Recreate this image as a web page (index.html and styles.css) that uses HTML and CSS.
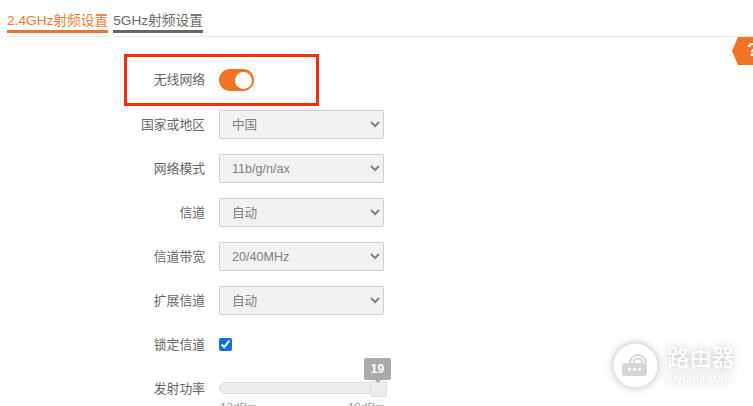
FILE: index.html
```html
<!DOCTYPE html>
<html lang="zh">
<head>
<meta charset="utf-8">
<title>射频设置</title>
<link rel="stylesheet" href="styles.css">
</head>
<body>
<div class="page">
  <nav class="tabs">
    <a class="tab tab-active">2.4GHz射频设置</a>
    <a class="tab">5GHz射频设置</a>
  </nav>
  <div class="help"><span class="help-mark">?</span></div>
  <form class="form">
    <div class="row row-first">
      <span class="label label-first">无线网络</span>
      <span class="toggle"><span class="knob"></span></span>
    </div>
    <div class="row"><span class="label">国家或地区</span><select class="select" disabled><option>中国</option></select></div>
    <div class="row"><span class="label">网络模式</span><select class="select" disabled><option>11b/g/n/ax</option></select></div>
    <div class="row"><span class="label">信道</span><select class="select" disabled><option>自动</option></select></div>
    <div class="row"><span class="label">信道带宽</span><select class="select" disabled><option>20/40MHz</option></select></div>
    <div class="row"><span class="label">扩展信道</span><select class="select" disabled><option>自动</option></select></div>
    <div class="row"><span class="label">锁定信道</span><input class="check" type="checkbox" checked></div>
    <div class="row">
      <span class="label">发射功率</span>
      <div class="slider">
        <div class="track"></div>
        <div class="thumb"></div>
        <div class="bubble">19</div>
        <div class="scale"><span>13dBm</span><span>19dBm</span></div>
      </div>
    </div>
  </form>
  <div class="highlight"></div>
  <div class="watermark">
    <svg class="wm-icon" width="45" height="45" viewBox="0 0 45 45">
      <circle cx="22.500" cy="22.500" r="22" fill="#fff"/>
      <rect x="9" y="20" width="25" height="13" rx="3" fill="#d6d6d6"/>
      <path d="M20.500 20a4.500 4.500 0 0 1 9 0M17 20a8 8 0 0 1 16 0" fill="none" stroke="#d6d6d6" stroke-width="2"/>
      <circle cx="16.500" cy="26.500" r="1.400" fill="#fff"/>
      <circle cx="21.500" cy="26.500" r="1.400" fill="#fff"/>
      <circle cx="26.500" cy="26.500" r="1.400" fill="#fff"/>
    </svg>
    <div class="wm-text">
      <div class="wm-title">路由器</div>
      <div class="wm-url">luyouqi.com</div>
    </div>
  </div>
</div>
</body>
</html>
```
FILE: styles.css
```css
* { box-sizing: border-box; }
html, body { margin: 0; padding: 0; background: #fff; overflow: hidden; }
body { font-family: "Liberation Sans", "Noto Sans CJK SC", sans-serif; color: #666; font-size: 13px; }
.page { position: relative; width: 753px; height: 406px; overflow: hidden; }

.tabs { display: flex; gap: 5px; margin-left: 7px; height: 37px; padding-top: 12px; border-bottom: 1px solid #ececec; align-items: flex-start; }
.tab { font-size: 13.7px; line-height: 17px; height: 21px; color: #6a6a6a; border-bottom: 3px solid #666; }
.tab-active { color: #f07c34; border-bottom-color: #f07424; }

.help { position: absolute; left: 732px; top: 37px; width: 24px; height: 28px; background: #f07424; clip-path: polygon(6px 0, 100% 0, 100% 100%, 6px 100%, 0 50%); }
.help-mark { position: absolute; left: 15px; top: 3px; color: #fff; font-weight: bold; font-size: 18px; line-height: 20px; }

.form { display: flex; flex-direction: column; padding-top: 29px; }
.row { display: grid; grid-template-columns: 205px 165px; column-gap: 14px; align-items: center; height: 29px; margin-bottom: 15px; }
.row-first { height: 28px; margin-bottom: 16px; }
.label { text-align: right; font-size: 12.800px; color: #666; padding-bottom: 2px; }
.label-first { padding-bottom: 3px; }

.toggle { display: block; position: relative; width: 35px; height: 22px; border-radius: 11px; background: #f07424; }
.knob { position: absolute; left: 16px; top: 2.5px; width: 17px; height: 17px; border-radius: 50%; background: #fff; }

.select { width: 165px; height: 29px; padding: 0 0 0 8px; font-family: inherit; font-size: 12.600px; color: #808080; background: #f2f2f2; border: 1px solid #ccd1d6; border-radius: 2px; opacity: 1; }

.check { margin: 0; width: 13px; height: 13px; accent-color: #0f6fe8; }

.slider { position: relative; height: 29px; width: 165px; }
.track { position: absolute; left: 0; top: 8px; width: 165px; height: 12px; border: 1px solid #ddd; border-radius: 6px; background: #ececec; }
.thumb { position: absolute; left: 151px; top: 7px; width: 17px; height: 16px; background: #ececec; border: 1px solid #ddd; border-radius: 2px; }
.bubble { position: absolute; left: 145px; top: -16px; width: 27px; height: 22px; background: #aaa; color: #fff; font-weight: bold; font-size: 12px; line-height: 22px; text-align: center; border-radius: 2px; }
.bubble::after { content: ""; position: absolute; left: 11px; bottom: -3px; border: 3px solid transparent; border-bottom: 0; border-top-color: #aaa; }
.scale { position: absolute; left: 1px; top: 26px; width: 165px; display: flex; justify-content: space-between; font-size: 11.700px; color: #999; line-height: 14px; }

.highlight { position: absolute; left: 124px; top: 54px; width: 195px; height: 52px; border: 3px solid #ff2a0c; }

.watermark { position: absolute; left: 613px; top: 343px; display: flex; align-items: center; gap: 9px; filter: drop-shadow(0 0 4px rgba(0,0,0,0.3)); }
.wm-icon { display: block; }
.wm-text { display: flex; flex-direction: column; align-items: flex-start; color: #fff; }
.wm-title { font-size: 22.500px; line-height: 26px; }
.wm-url { font-size: 12px; line-height: 13px; }
```
